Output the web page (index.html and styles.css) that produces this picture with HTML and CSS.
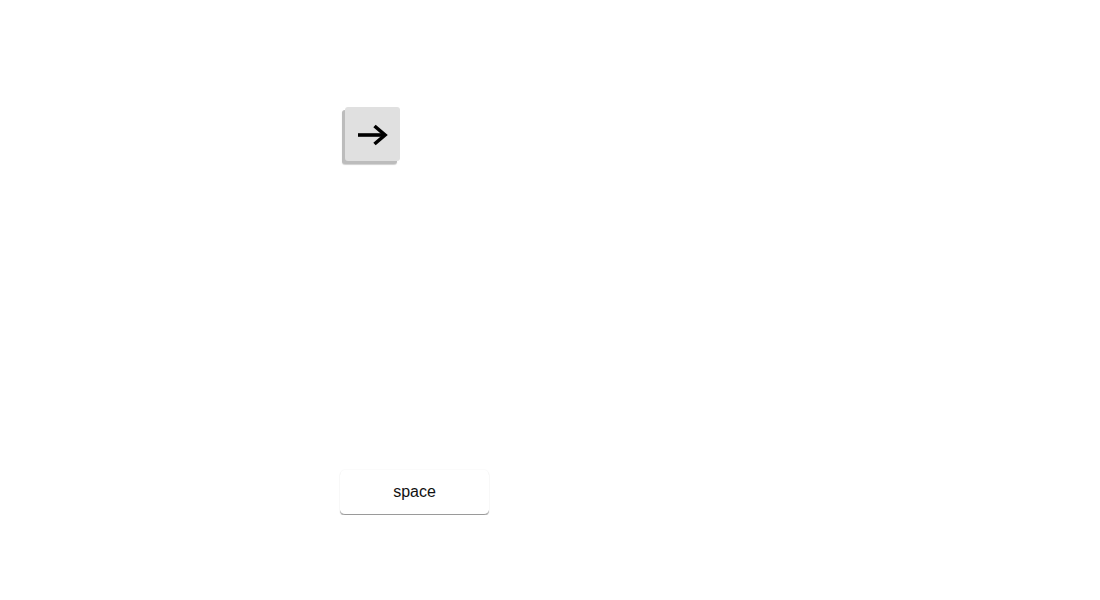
FILE: index.html
```html
<!DOCTYPE html>
<html>
<head>
<meta charset="utf-8">
<link rel="stylesheet" href="styles.css">
</head>
<body>
<div class="stage">
  <div class="key arrow-key">
    <svg width="32" height="24" viewBox="0 0 32 24" class="arrow">
      <path d="M1 12 H28" stroke="#000" stroke-width="3.6" fill="none"/>
      <path d="M17.5 3 L28 12 L17.5 21" stroke="#000" stroke-width="3.6" fill="none" stroke-linejoin="miter" stroke-linecap="butt"/>
    </svg>
  </div>
  <div class="key space-key">space</div>
</div>
</body>
</html>
```
FILE: styles.css
```css
html, body {
  margin: 0;
  padding: 0;
  background: #fff;
  font-family: "Liberation Sans", Arial, sans-serif;
}
.stage {
  padding: 107px 0 0 345px;
  display: flex;
  flex-direction: column;
  align-items: flex-start;
}
.arrow-key {
  width: 55px;
  height: 54px;
  background: #e0e0e0;
  border-radius: 3px;
  box-shadow: -3px 3px 0 #bcbcbc, -3px 4px 1px #d0d0d0;
  display: flex;
  align-items: center;
  justify-content: center;
}
.arrow { display: block; margin-left: 0; margin-top: 1px; }
.space-key {
  margin-top: 309px;
  margin-left: -5px;
  width: 149px;
  height: 44px;
  background: #fff;
  border-radius: 5px;
  border-bottom: 1px solid #9a9a9a;
  box-shadow: 0 1px 1px rgba(0,0,0,0.3), 0 -1px 1px rgba(0,0,0,0.02);
  display: flex;
  align-items: center;
  justify-content: center;
  font-size: 16px;
  color: #111;
}
```
